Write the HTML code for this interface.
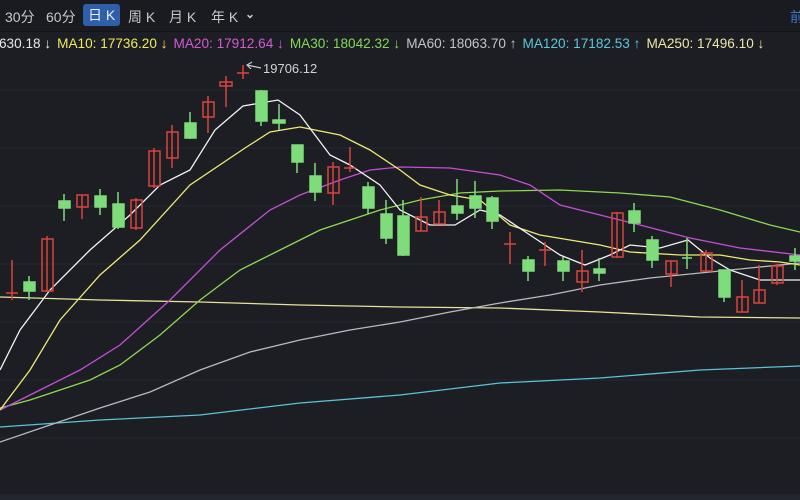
<!DOCTYPE html>
<html><head><meta charset="utf-8"><style>
html,body{margin:0;padding:0;width:800px;height:500px;overflow:hidden;background:#1c1d23;font-family:"Liberation Sans","Noto Sans CJK SC",sans-serif}
.top{position:absolute;left:0;top:0;width:800px;height:31px;background:#1a1b20;border-bottom:1px solid #121316}
.top span{position:absolute;top:7px;font-size:14px;color:#c8c9cc}
.top .act{background:#2f5fa8;color:#e8eefc;top:4px;padding:2px 5px;border-radius:3px;height:18px;line-height:18px}
.ma{position:absolute;left:0;top:32px;width:800px;height:23px;background:#1d1e24;font-size:13.6px;line-height:23px;white-space:nowrap}
.ma span{margin-right:6px}
svg{position:absolute;left:0;top:0}
</style></head><body>
<svg width="800" height="500">
<rect x="0" y="56" width="800" height="438" fill="#1c1e24"/>
<rect x="0" y="494" width="800" height="6" fill="#24262d"/>
<g stroke="#262830" stroke-width="1">
<line x1="0" y1="90" x2="800" y2="90"/><line x1="0" y1="148" x2="800" y2="148"/><line x1="0" y1="206" x2="800" y2="206"/><line x1="0" y1="264" x2="800" y2="264"/><line x1="0" y1="322" x2="800" y2="322"/><line x1="0" y1="380" x2="800" y2="380"/><line x1="0" y1="438" x2="800" y2="438"/>
</g>
<g fill="none" stroke-width="1.3">
<polyline stroke="#e6e39a" points="0,297 100,300 200,302 300,305 400,307 500,308 600,312 700,317 800,318"/>
<polyline stroke="#5bc3d9" points="0,427 100,420 200,415 300,403 400,395 500,383 600,378 700,370 800,366"/>
<polyline stroke="#b9b9bf" points="0,442 50,425 100,408 150,392 200,370 250,352 300,340 350,330 400,322 450,312 500,303 550,295 600,285 650,278 700,273 750,268 800,263"/>
<polyline stroke="#8fd94f" points="0,408 30,400 60,390 90,380 120,365 160,335 200,300 240,270 280,250 320,230 350,220 380,210 420,200 460,193 500,191 560,190 620,193 670,197 720,210 770,225 800,232"/>
<polyline stroke="#c64fd6" points="0,410 40,390 80,370 120,345 170,300 220,250 270,210 300,195 340,180 370,170 400,167 450,168 500,175 530,185 560,205 600,215 640,225 690,238 740,248 800,255"/>
<polyline stroke="#eeea72" points="0,410 30,370 60,320 100,275 140,240 190,185 245,148 270,132 300,127 340,135 370,150 400,170 420,185 450,195 480,200 510,225 540,235 570,240 600,245 630,252 680,255 720,255 750,260 780,262 800,265"/>
<polyline stroke="#f2f2f2" points="0,370 20,330 50,290 90,250 130,215 160,185 190,170 215,130 243,106 278,100 300,115 330,155 350,165 380,185 400,210 430,225 455,225 480,210 500,215 530,235 560,255 585,265 610,255 630,245 660,248 688,240 710,258 730,270 760,280 790,280 800,280"/>
</g>
<g stroke-width="1.5">
<g stroke="#d9443c" fill="none">
<line x1="12" y1="260" x2="12" y2="300"/><line x1="6" y1="293" x2="18" y2="293"/>
<line x1="47" y1="236" x2="47" y2="292"/><rect x="42" y="239" width="11" height="52"/>
<line x1="82" y1="195" x2="82" y2="219"/><rect x="77" y="195" width="11" height="12"/>
<line x1="136" y1="198" x2="136" y2="230"/><rect x="131" y="200" width="11" height="28"/>
<line x1="154" y1="148" x2="154" y2="188"/><rect x="149" y="151" width="11" height="35"/>
<line x1="172" y1="125" x2="172" y2="168"/><rect x="167" y="132" width="11" height="26"/>
<line x1="208" y1="96" x2="208" y2="133"/><rect x="203" y="102" width="11" height="15"/>
<line x1="226" y1="76" x2="226" y2="107"/><rect x="220" y="82" width="12" height="4"/>
<line x1="243" y1="65" x2="243" y2="79"/><line x1="237" y1="73" x2="249" y2="73"/>
<line x1="333" y1="162" x2="333" y2="205"/><rect x="328" y="167" width="11" height="26"/>
<line x1="350" y1="147" x2="350" y2="172"/><line x1="344" y1="168" x2="356" y2="168"/>
<line x1="421" y1="197" x2="421" y2="231"/><rect x="416" y="217" width="11" height="14"/>
<line x1="439" y1="200" x2="439" y2="224"/><rect x="434" y="212" width="11" height="12"/>
<line x1="510" y1="232" x2="510" y2="264"/><line x1="504" y1="244" x2="516" y2="244"/>
<line x1="545" y1="242" x2="545" y2="266"/><line x1="539" y1="250" x2="551" y2="250"/>
<line x1="582" y1="250" x2="582" y2="292"/><rect x="577" y="271" width="11" height="11"/>
<line x1="617" y1="212" x2="617" y2="258"/><rect x="612" y="213" width="11" height="44"/>
<line x1="671" y1="261" x2="671" y2="287"/><rect x="666" y="261" width="11" height="13"/>
<line x1="706" y1="250" x2="706" y2="271"/><rect x="701" y="253" width="11" height="18"/>
<line x1="742" y1="280" x2="742" y2="312"/><rect x="737" y="297" width="11" height="15"/>
<line x1="759" y1="265" x2="759" y2="303"/><rect x="754" y="290" width="11" height="13"/>
<line x1="777" y1="264" x2="777" y2="285"/><rect x="772" y="266" width="11" height="17"/>
</g>
<g stroke="#7fdc7a" fill="#7fdc7a">
<line x1="29" y1="276" x2="29" y2="300"/><rect x="24" y="282" width="11" height="9"/>
<line x1="64" y1="194" x2="64" y2="221"/><rect x="59" y="201" width="11" height="7"/>
<line x1="100" y1="189" x2="100" y2="215"/><rect x="95" y="196" width="11" height="11"/>
<line x1="118" y1="192" x2="118" y2="229"/><rect x="113" y="204" width="11" height="23"/>
<line x1="190" y1="112" x2="190" y2="139"/><rect x="185" y="123" width="11" height="15"/>
<line x1="261" y1="90" x2="261" y2="126"/><rect x="256" y="91" width="11" height="30"/>
<line x1="279" y1="104" x2="279" y2="130"/><rect x="273" y="120" width="12" height="3"/>
<line x1="297" y1="145" x2="297" y2="173"/><rect x="292" y="145" width="11" height="17"/>
<line x1="315" y1="163" x2="315" y2="201"/><rect x="310" y="176" width="11" height="16"/>
<line x1="368" y1="182" x2="368" y2="214"/><rect x="363" y="187" width="11" height="21"/>
<line x1="386" y1="200" x2="386" y2="244"/><rect x="381" y="214" width="11" height="24"/>
<line x1="403" y1="200" x2="403" y2="256"/><rect x="398" y="216" width="11" height="39"/>
<line x1="457" y1="179" x2="457" y2="220"/><rect x="452" y="206" width="11" height="7"/>
<line x1="475" y1="181" x2="475" y2="218"/><rect x="470" y="196" width="11" height="12"/>
<line x1="492" y1="196" x2="492" y2="229"/><rect x="487" y="198" width="11" height="23"/>
<line x1="528" y1="256" x2="528" y2="281"/><rect x="523" y="260" width="11" height="11"/>
<line x1="563" y1="257" x2="563" y2="281"/><rect x="558" y="261" width="11" height="10"/>
<line x1="599" y1="258" x2="599" y2="281"/><rect x="594" y="269" width="11" height="4"/>
<line x1="634" y1="203" x2="634" y2="232"/><rect x="629" y="211" width="11" height="12"/>
<line x1="652" y1="236" x2="652" y2="268"/><rect x="647" y="240" width="11" height="20"/>
<line x1="687" y1="238" x2="687" y2="269"/><line x1="682" y1="258" x2="692" y2="258"/>
<line x1="724" y1="270" x2="724" y2="302"/><rect x="719" y="270" width="11" height="27"/>
<line x1="795" y1="248" x2="795" y2="270"/><rect x="790" y="256" width="11" height="5"/>
</g>
</g>
<g stroke="#c8c9cc" fill="none" stroke-width="1.2"><line x1="247" y1="65" x2="261" y2="68"/><polyline points="252,62 247,65 251,69"/></g>
<text x="263" y="73" fill="#d2d3d6" font-size="13" font-family="Liberation Sans,sans-serif">19706.12</text>
</svg>
<div class="top">
<span style="left:5px">30分</span>
<span style="left:46px">60分</span>
<span class="act" style="left:83px">日 K</span>
<span style="left:128px">周 K</span>
<span style="left:169px">月 K</span>
<span style="left:211px">年 K</span>
<span style="left:245px;font-size:12px;top:7px;font-weight:bold">⌄</span>
<span style="left:790px;color:#3f74c9">前</span>
</div>
<div class="ma"><span style="color:#e8e8e8;margin-left:-1px">630.18 ↓</span><span style="color:#eeea5c">MA10: 17736.20 ↓</span><span style="color:#d45ad6">MA20: 17912.64 ↓</span><span style="color:#7fd957">MA30: 18042.32 ↓</span><span style="color:#c4c4c8">MA60: 18063.70 ↑</span><span style="color:#5cc6dc">MA120: 17182.53 ↑</span><span style="color:#ece7a6">MA250: 17496.10 ↓</span></div>
</body></html>
